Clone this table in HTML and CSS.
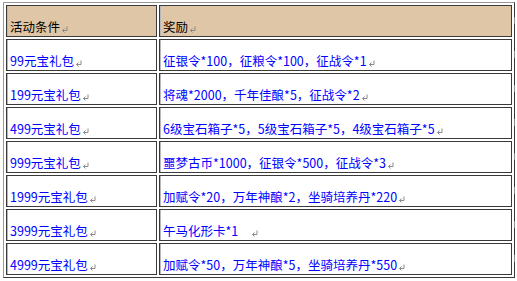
FILE: index.html
```html
<!DOCTYPE html>
<html lang="zh-CN">
<head>
    <meta charset="UTF-8">
    <title>礼包奖励</title>
    <link rel="stylesheet" href="styles.css">
</head>
<body>

<svg class="defs" aria-hidden="true">
    <symbol id="ret" viewBox="0 0 7 7">
        <path d="M6 0.5 V4.5 H1.5 M3.5 2.5 L1.5 4.5 L3.5 6.5" fill="none" stroke="#8a8a8a" stroke-width="1"/>
    </symbol>
</svg>

<table class="grid">
    <tr class="head">
        <td class="c1">活动条件<svg class="pm"><use href="#ret"/></svg></td>
        <td class="c2">奖励<svg class="pm"><use href="#ret"/></svg></td>
    </tr>
    <tr>
        <td class="c1">99元宝礼包<svg class="pm"><use href="#ret"/></svg></td>
        <td class="c2">征银令*100，征粮令*100，征战令*1<svg class="pm"><use href="#ret"/></svg></td>
    </tr>
    <tr>
        <td class="c1">199元宝礼包<svg class="pm"><use href="#ret"/></svg></td>
        <td class="c2">将魂*2000，千年佳酿*5，征战令*2<svg class="pm"><use href="#ret"/></svg></td>
    </tr>
    <tr>
        <td class="c1">499元宝礼包<svg class="pm"><use href="#ret"/></svg></td>
        <td class="c2">6级宝石箱子*5，5级宝石箱子*5，4级宝石箱子*5<svg class="pm"><use href="#ret"/></svg></td>
    </tr>
    <tr>
        <td class="c1">999元宝礼包<svg class="pm"><use href="#ret"/></svg></td>
        <td class="c2">噩梦古币*1000，征银令*500，征战令*3<svg class="pm"><use href="#ret"/></svg></td>
    </tr>
    <tr>
        <td class="c1">1999元宝礼包<svg class="pm"><use href="#ret"/></svg></td>
        <td class="c2">加赋令*20，万年神酿*2，坐骑培养丹*220<svg class="pm"><use href="#ret"/></svg></td>
    </tr>
    <tr>
        <td class="c1">3999元宝礼包<svg class="pm"><use href="#ret"/></svg></td>
        <td class="c2">午马化形卡*1<span class="gap"></span><svg class="pm"><use href="#ret"/></svg></td>
    </tr>
    <tr>
        <td class="c1">4999元宝礼包<svg class="pm"><use href="#ret"/></svg></td>
        <td class="c2">加赋令*50，万年神酿*5，坐骑培养丹*550<svg class="pm"><use href="#ret"/></svg></td>
    </tr>
</table>

</body>
</html>
```

FILE: styles.css
```css
body {
    margin: 0;
    padding: 2px 0 0 3px;
    background: #fff;
    font-family: "Noto Sans CJK SC", sans-serif;
    font-size: 12.5px;
}
.defs {
    position: absolute;
    width: 0;
    height: 0;
}
.grid {
    width: 512px;
    table-layout: fixed;
    border-collapse: separate;
    border-spacing: 2px;
    border: 1px solid;
    border-color: #9a9a9a #3a3a3a #3a3a3a #9a9a9a;
}
.grid td {
    position: relative;
    box-sizing: border-box;
    height: 32px;
    padding: 0 2px 1px 3px;
    vertical-align: bottom;
    line-height: 16px;
    white-space: nowrap;
    color: #0000ff;
    border: 1px solid #3a3a3a;
    box-shadow: inset 1px 0 0 #b8b8b8;
}
.grid .c1 {
    width: 151px;
}
.grid .head td {
    color: #000;
    background: #dfc6a6;
}
/* end-of-row mark, sits just outside the right edge */
.grid .c2::after {
    content: "";
    position: absolute;
    left: calc(100% + 3px);
    top: 50%;
    width: 2px;
    height: 7px;
    margin-top: -4px;
    border-left: 1px solid #8a8a8a;
}
.pm {
    width: 7px;
    height: 7px;
    margin-left: 1px;
    vertical-align: -1px;
}
.gap {
    display: inline-block;
    width: 12px;
}
```
